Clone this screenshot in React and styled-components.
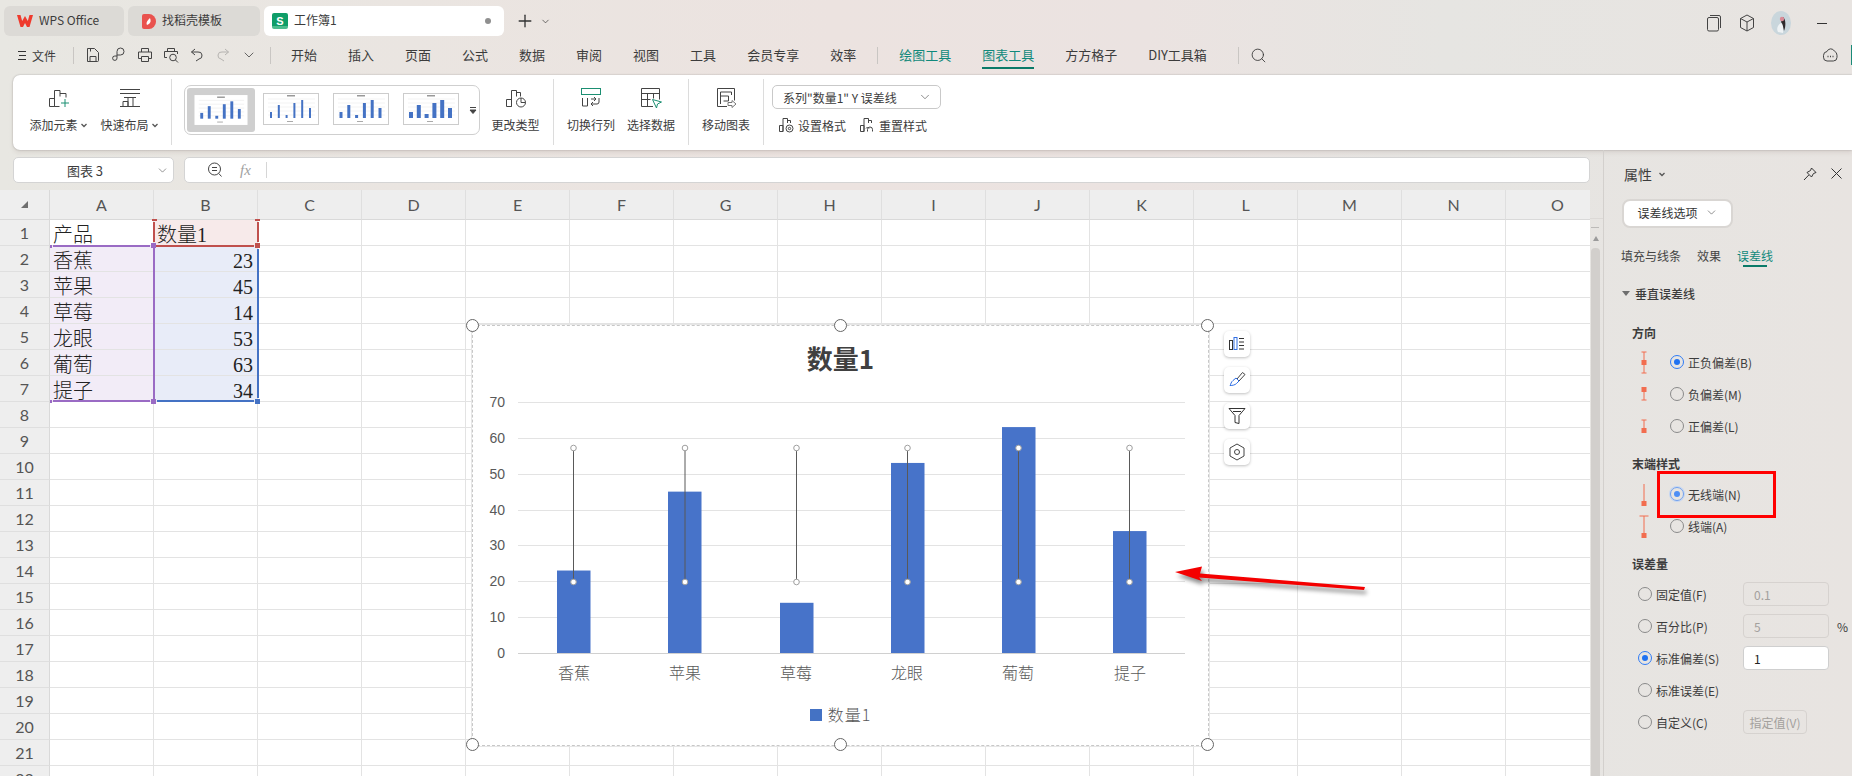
import React from "react";
import styled, { createGlobalStyle } from "styled-components";
import { ChevronDown, Plus, Search } from "lucide-react";

const GlobalStyle = createGlobalStyle`
  html, body {
    margin: 0;
    padding: 0;
    overflow: hidden;
    background: #fff;
  }
  body {
    font-family: "Noto Sans CJK SC", "Liberation Sans", sans-serif;
    color: #333;
  }
  * { box-sizing: border-box; }
`;

const Window = styled.div`
  width: 1852px;
  height: 776px;
  overflow: hidden;
  display: flex;
  flex-direction: column;
  background: linear-gradient(90deg, #e8e7e2 0%, #eae5e1 22%, #ece3e0 45%, #ebe3e1 62%, #e6e5e2 78%, #e8e4e1 100%);
`;

/* ---------- title bar ---------- */
const TitleBar = styled.div`
  height: 42px;
  display: flex;
  align-items: flex-start;
  padding: 6px 0 0 4px;
  gap: 4px;
`;

const Tab = styled.div`
  width: ${(p) => p.$w}px;
  height: 30px;
  padding-left: ${(p) => p.$pad}px;
  display: flex;
  align-items: center;
  gap: 6px;
  border-radius: 6px;
  font-size: 12px;
  color: #3c3c3c;
  background: ${(p) => (p.$active ? "#ffffff" : "#dcdad6")};
`;

const TabLabel = styled.span`
  line-height: 16px;
  padding-bottom: 2px;
`;

const SheetBadge = styled.span`
  width: 16px;
  height: 16px;
  border-radius: 2px;
  background: linear-gradient(180deg, #0f9d68 82%, #4cbc8e 82%);
  color: #fff;
  font: 700 11px "Liberation Sans", sans-serif;
  display: flex;
  align-items: center;
  justify-content: center;
`;

const TabDot = styled.span`
  width: 6px;
  height: 6px;
  border-radius: 50%;
  background: #8f8f8f;
  margin-left: auto;
  margin-right: 13px;
`;

const NewTab = styled.div`
  display: flex;
  align-items: center;
  height: 30px;
  margin-left: 7px;
  gap: 5px;
  color: #333;
`;

const WindowIcons = styled.div`
  margin-left: auto;
  display: flex;
  align-items: center;
  height: 24px;
  margin-top: 5px;
  padding-right: 24px;
  color: #444;
`;

const WinIcon = styled.span`
  display: flex;
  margin-left: ${(p) => p.$ml}px;
`;

/* ---------- menu bar ---------- */
const MenuBar = styled.div`
  height: 26px;
  margin-bottom: 7px;
  display: flex;
  align-items: center;
  padding-left: 18px;
  font-size: 13px;
  color: #3c3c3c;
`;

const FileMenu = styled.div`
  display: flex;
  align-items: center;
  gap: 5px;
  font-size: 12px;
  width: 55px;
`;

const MenuSep = styled.span`
  width: 1px;
  height: 17px;
  background: #c9c6c3;
  flex: none;
  margin: ${(p) => p.$m};
`;

const QuickIcons = styled.div`
  display: flex;
  align-items: center;
  gap: 10px;
  color: #444;
`;

const MenuItems = styled.div`
  display: flex;
  gap: 31px;
`;

const MenuItem = styled.span`
  position: relative;
  line-height: 26px;
  white-space: nowrap;
  color: ${(p) => (p.$teal ? "#10897b" : "#3c3c3c")};

  ${(p) =>
    p.$current &&
    `&::after {
      content: "";
      position: absolute;
      left: 0;
      right: 0;
      bottom: -1px;
      height: 2px;
      background: #0a7a68;
    }`}
`;

const MenuEnd = styled.div`
  margin-left: auto;
  display: flex;
  align-items: center;
  color: #444;
`;

const TealEdge = styled.span`
  width: 1px;
  height: 20px;
  background: #1a8a78;
  margin-left: 12px;
`;

/* ---------- ribbon ---------- */
const Ribbon = styled.div`
  height: 75px;
  margin-left: 13px;
  flex: none;
  display: flex;
  align-items: flex-start;
  background: #fff;
  border-radius: 7px 0 0 7px;
  box-shadow: 0 0 2px rgba(0, 0, 0, 0.28), 0 3px 4px rgba(120, 100, 90, 0.12);
  padding-left: 10px;
`;

const RibbonButton = styled.div`
  width: ${(p) => p.$w}px;
  flex: none;
  padding-top: 11px;
  display: flex;
  flex-direction: column;
  align-items: center;
  font-size: 12px;
  color: #3c3c3c;
`;

const RibbonIcon = styled.div`
  height: 24px;
  display: flex;
  align-items: center;
  justify-content: center;
`;

const RibbonLabel = styled.div`
  margin-top: 6px;
  line-height: 18px;
  display: flex;
  align-items: center;
  gap: 2px;
  white-space: nowrap;
`;

const RibbonSep = styled.span`
  width: 1px;
  height: 66px;
  flex: none;
  margin: 4px ${(p) => p.$r}px 0 ${(p) => p.$l}px;
  background: #dcdcdc;
`;

const Gallery = styled.div`
  width: 296px;
  height: 50px;
  margin-top: 10px;
  flex: none;
  position: relative;
  display: flex;
  align-items: center;
  padding-left: 2px;
  border: 1px solid #cfcfcf;
  border-radius: 7px;
`;

const ThumbFrame = styled.div`
  width: 68px;
  height: 44px;
  flex: none;
  margin-right: 2px;
  padding-top: ${(p) => (p.$active ? "6px" : "5px")};
  display: flex;
  justify-content: center;
  border-radius: 3px;
  background: ${(p) => (p.$active ? "#cfcfcf" : "transparent")};
`;

const GalleryMore = styled.div`
  position: absolute;
  right: 1px;
  top: 20px;
  display: flex;
`;

const StyleColumn = styled.div`
  margin-left: 8px;
  padding-top: 10px;
  display: flex;
  flex-direction: column;
`;

const SeriesSelect = styled.div`
  width: 169px;
  height: 24px;
  padding: 0 8px 0 10px;
  display: flex;
  align-items: center;
  justify-content: space-between;
  border: 1px solid #c9c9c9;
  border-radius: 5px;
  font-size: 12px;
  color: #3c3c3c;
  white-space: pre;
`;

const StyleActions = styled.div`
  display: flex;
  margin-top: 7px;
  gap: 13px;
  padding-left: 6px;
`;

const StyleAction = styled.div`
  display: flex;
  align-items: center;
  gap: 4px;
  height: 18px;
  font-size: 12px;
  color: #3c3c3c;
`;

/* ---------- work area ---------- */
const WorkArea = styled.div`
  flex: 1;
  min-height: 0;
  display: flex;
`;

const LeftColumn = styled.div`
  width: 1590px;
  display: flex;
  flex-direction: column;
`;

const FormulaRow = styled.div`
  height: 26px;
  margin: 7px 0 7px 13px;
  flex: none;
  display: flex;
  gap: 10px;
`;

const NameBox = styled.div`
  width: 161px;
  position: relative;
  display: flex;
  align-items: center;
  justify-content: center;
  padding-right: 17px;
  background: #fff;
  border: 1px solid #d4d4d4;
  border-radius: 5px;
  font-size: 13px;
  color: #3c3c3c;

  svg {
    position: absolute;
    right: 4px;
    top: 6px;
  }
`;

const FormulaBox = styled.div`
  flex: 1;
  display: flex;
  align-items: center;
  padding-left: 22px;
  background: #fff;
  border: 1px solid #d4d4d4;
  border-radius: 5px;
  color: #555;
`;

const FxLabel = styled.span`
  width: 26px;
  margin-left: 17px;
  text-align: left;
  font: italic 15px "Liberation Serif", serif;
  color: #a0a0a0;
`;

const FormulaSep = styled.span`
  width: 1px;
  height: 16px;
  background: #d6d6d6;
`;

const Sheet = styled.div`
  flex: 1;
  position: relative;
  overflow: hidden;
  background: #fff;
`;

const HeaderRow = styled.div`
  height: 30px;
  display: flex;
`;

const Corner = styled.div`
  width: 50px;
  flex: none;
  display: flex;
  align-items: center;
  justify-content: center;
  background: #eeeeee;
  border-right: 1px solid #d9d9d9;
  border-bottom: 1px solid #d9d9d9;
`;

const ColHead = styled.div`
  width: 104px;
  flex: none;
  display: flex;
  align-items: center;
  justify-content: center;
  background: #eeeeee;
  border-right: 1px solid #dfdfdf;
  border-bottom: 1px solid #d9d9d9;
  font: 16px Lato, "Liberation Sans", sans-serif;
  color: #555;
`;

const GridRow = styled.div`
  height: 26px;
  display: flex;
`;

const RowHead = styled.div`
  width: 50px;
  flex: none;
  display: flex;
  align-items: center;
  justify-content: center;
  background: #eeeeee;
  border-right: 1px solid #d9d9d9;
  border-bottom: 1px solid #dfdfdf;
  font: 16px Lato, "Liberation Sans", sans-serif;
  color: #555;
`;

const Cell = styled.div`
  width: 104px;
  flex: none;
  display: flex;
  align-items: center;
  justify-content: ${(p) => (p.$num ? "flex-end" : "flex-start")};
  padding: 5px 4px 0 3px;
  background: ${(p) => p.$tint || "#fff"};
  border-right: 1px solid #e3e3e3;
  border-bottom: 1px solid #e3e3e3;
  font: 300 20px "Liberation Serif", "Noto Sans CJK SC", serif;
  line-height: 23px;
  color: #222;
  overflow: visible;
  white-space: nowrap;
`;

const RangeMark = styled.div`
  position: absolute;
  left: ${(p) => p.$x}px;
  top: ${(p) => p.$y}px;
  width: ${(p) => p.$w}px;
  height: ${(p) => p.$h}px;
  background: ${(p) => p.$c};
`;

/* ---------- chart ---------- */
const ChartFrame = styled.div`
  position: absolute;
  left: 472px;
  top: 135px;
  width: 737px;
  height: 421px;
  display: flex;
  flex-direction: column;
  background: #fff;
  border: 1px dashed #c8c8c8;
  outline: 1px solid #e6e6e6;
`;

const ChartTitle = styled.div`
  height: 65px;
  flex: none;
  padding-bottom: 2px;
  line-height: 63px;
  text-align: center;
  font-size: 26px;
  font-weight: 700;
  color: #404040;
`;

const Legend = styled.div`
  height: 48px;
  display: flex;
  align-items: center;
  justify-content: center;
  gap: 6px;
  font-size: 16px;
  font-weight: 300;
  letter-spacing: 1px;
  color: #595959;
`;

const LegendSwatch = styled.span`
  width: 12px;
  height: 12px;
  margin-top: 2px;
  background: #4472c4;
`;

const Handle = styled.span`
  position: absolute;
  left: ${(p) => p.$x}%;
  top: ${(p) => p.$y}%;
  width: 13px;
  height: 13px;
  margin: -7px 0 0 -7px;
  border-radius: 50%;
  background: #fff;
  border: 1.5px solid #666;
`;

const ChartTools = styled.div`
  position: absolute;
  left: 1224px;
  top: 141px;
  display: flex;
  flex-direction: column;
  gap: 10px;
`;

const ChartTool = styled.div`
  width: 26px;
  height: 26px;
  display: flex;
  align-items: center;
  justify-content: center;
  background: #fff;
  border-radius: 5px;
  box-shadow: 0 1px 3px rgba(0, 0, 0, 0.25);
`;

const ArrowMark = styled.svg`
  position: absolute;
  left: 1170px;
  top: 370px;
  width: 200px;
  height: 40px;
  overflow: visible;
  filter: drop-shadow(2px 4px 2px rgba(0, 0, 0, 0.45));
`;

/* ---------- scrollbar ---------- */
const ScrollColumn = styled.div`
  width: 13px;
  flex: none;
  display: flex;
  flex-direction: column;
  align-items: flex-start;
`;

const ScrollHead = styled.div`
  width: 13px;
  height: 69px;
  flex: none;
  border-bottom: 1px solid #dcd9d6;
`;

const ScrollDash = styled.span`
  width: 8px;
  height: 1px;
  margin: 8px 0 0 1px;
  background: #bcbab8;
`;

const ScrollUp = styled.span`
  width: 0;
  height: 0;
  margin: 8px 0 0 3px;
  border: 3px solid transparent;
  border-bottom: 5px solid #9b9b9b;
  border-top: 0;
`;

const ScrollThumb = styled.div`
  width: 9px;
  flex: 1;
  margin: 7px 0 0 1px;
  border-radius: 4px 4px 0 0;
  background: #d2cfcc;
`;

/* ---------- property panel ---------- */
const Panel = styled.div`
  width: 249px;
  flex: none;
  border-left: 1px solid #d3d0cd;
  font-size: 12px;
  color: #3c3c3c;
`;

const PanelHead = styled.div`
  height: 47px;
  margin-bottom: 2px;
  display: flex;
  align-items: center;
  padding: 0 10px 0 20px;
  font-size: 14px;
`;

const HeadCaret = styled.span`
  display: flex;
  margin-left: 6px;
`;

const PanelHeadIcons = styled.div`
  margin-left: auto;
  display: flex;
  align-items: center;
  gap: 14px;
  color: #444;
`;

const OptionSelect = styled.div`
  width: 111px;
  height: 29px;
  margin-left: 18px;
  padding-bottom: 2px;
  display: flex;
  align-items: center;
  justify-content: center;
  gap: 7px;
  background: #fff;
  border: 2px solid #d9d6d3;
  border-radius: 8px;
  color: #333;
`;

const PanelTabs = styled.div`
  height: 24px;
  margin-top: 15px;
  padding-left: 17px;
  display: flex;
  align-items: center;
  gap: 16px;
`;

const PanelTab = styled.span`
  position: relative;
  color: ${(p) => (p.$active ? "#10897b" : "#444")};

  ${(p) =>
    p.$active &&
    `&::after {
      content: "";
      position: absolute;
      left: 6px;
      right: 6px;
      bottom: -3px;
      height: 2px;
      background: #0a7a68;
    }`}
`;

const SectionTitle = styled.div`
  height: 20px;
  margin-top: 16px;
  padding-left: 18px;
  display: flex;
  align-items: center;
  gap: 5px;
  font-weight: 500;
`;

const Triangle = styled.span`
  width: 0;
  height: 0;
  border: 4px solid transparent;
  border-top: 5px solid #6e6e6e;
  border-bottom: 0;
`;

const GroupTitle = styled.div`
  height: 20px;
  margin-top: ${(p) => p.$mt}px;
  margin-bottom: ${(p) => p.$mb}px;
  padding-left: 28px;
  line-height: 20px;
  font-weight: 700;
`;

const OptionRow = styled.div`
  height: 32px;
  padding-left: ${(p) => p.$pad}px;
  display: flex;
  align-items: center;
  white-space: nowrap;
`;

const OptionIcon = styled.span`
  width: 20px;
  margin-right: 16px;
  display: flex;
  justify-content: center;
`;

const Radio = styled.span`
  width: 14px;
  height: 14px;
  flex: none;
  margin-right: 4px;
  border-radius: 50%;
  border: 1px solid ${(p) => (p.$soft ? "#6fa0f0" : p.$checked ? "#2f7bf5" : "#8a8a8a")};
  box-shadow: ${(p) => (p.$soft ? "0 0 0 1px #c4d6f2" : "none")};
  display: flex;
  align-items: center;
  justify-content: center;

  &::after {
    content: "";
    width: 6px;
    height: 6px;
    border-radius: 50%;
    background: ${(p) => (p.$soft ? "#4d8ef5" : p.$checked ? "#1f72f2" : "transparent")};
  }
`;

const AmountLabel = styled.span`
  width: 87px;
`;

const AmountInput = styled.div`
  width: 86px;
  height: 24px;
  padding-left: 10px;
  display: flex;
  align-items: center;
  border-radius: 4px;
  border: 1px solid ${(p) => (p.$filled ? "#cfcfcf" : "#d6d2cf")};
  background: ${(p) => (p.$filled ? "#ffffff" : "transparent")};
  color: ${(p) => (p.$filled ? "#222" : "#a3a09d")};
`;

const PercentSign = styled.span`
  margin-left: 8px;
`;

const GhostButton = styled.div`
  width: 64px;
  height: 24px;
  display: flex;
  align-items: center;
  justify-content: center;
  border-radius: 4px;
  border: 1px solid #d6d2cf;
  color: #a3a09d;
`;

const RedBox = styled.div`
  position: absolute;
  left: 1657px;
  top: 471px;
  width: 119px;
  height: 47px;
  border: 3px solid #ff0000;
`;

const Root = styled.div`
  position: relative;
  width: 1852px;
  height: 776px;
`;

/* ---------- drawn icons ---------- */
const Svg = ({ w = 24, h = 24, children, stroke = "#444", sw = 1 }) => (
  <svg width={w} height={h} viewBox={`0 0 ${w} ${h}`} fill="none" stroke={stroke} strokeWidth={sw}>
    {children}
  </svg>
);

const SmallCaret = () => (
  <Svg w={8} h={8} stroke="#555" sw={1.3}>
    <path d="M1.5 3l2.5 2.500L6.500 3" />
  </Svg>
);

const WpsLogo = () => (
  <svg width="16" height="12" viewBox="0 0 16 12">
    <path d="M0 0h3.500L5.200 6 8 1l2.800 5L12.500 0H16l-3.500 12H10L8 8l-2 4H3.500z" fill="#ef3a2d" />
  </svg>
);

const DocerLogo = () => (
  <svg width="14" height="15" viewBox="0 0 14 15">
    <path d="M0 2a2 2 0 0 1 2-2h5a7 7.500 0 0 1 0 15H2a2 2 0 0 1-2-2z" fill="#e9524e" />
    <path d="M5 11c-1.500-2.500 1-5 3-7 .8 2.500 1.500 5-3 7z" fill="#fff" />
  </svg>
);

const Avatar = () => (
  <svg width="20" height="24" viewBox="0 0 20 24">
    <ellipse cx="10" cy="12" rx="10" ry="12" fill="#c9d6dc" />
    <path d="M7 21c-2-4 0-7 3-9l3 2-1 8z" fill="#eef2f4" />
    <path d="M12 6c3 2 3 10 1 14-1-4-1-7-3-9z" fill="#2f2a2c" />
    <circle cx="11" cy="8" r="2.200" fill="#d98a96" />
  </svg>
);

const CopyIcon = () => (
  <Svg w={16} h={18}>
    <rect x="1.500" y="3.500" width="11" height="13.500" rx="1.500" />
    <path d="M4 1.500h9a1.500 1.500 0 0 1 1.500 1.500v11" />
  </Svg>
);

const CubeIcon = () => (
  <Svg w={16} h={18}>
    <path d="M8 1l6.500 3.500v9L8 17l-6.500-3.500v-9zM1.500 4.500L8 8l6.500-3.500M8 8v9" />
  </Svg>
);

const MinimizeIcon = () => (
  <Svg w={12} h={10} stroke="#333">
    <path d="M1 5.500h10" />
  </Svg>
);

const SaveIcon = () => (
  <Svg w={16} h={16}>
    <path d="M2.500 1.500h7l4 4v8a1 1 0 0 1-1 1h-10zM5 14.500V9.500h6v5M5.500 1.500v3" />
  </Svg>
);

const KeyIcon = () => (
  <Svg w={16} h={16}>
    <path d="M6 9V4.500a3.500 3.500 0 1 1 3.500 3.500H6M6 9v2a2.200 2.200 0 1 1-2.200-2H6" />
  </Svg>
);

const PrintIcon = () => (
  <Svg w={16} h={16}>
    <path d="M4.500 5V1.500h7V5M4.500 11.500h-3V5h13v6.500h-3M4.500 9.500h7v5h-7z" />
  </Svg>
);

const PreviewIcon = () => (
  <Svg w={16} h={16}>
    <path d="M4.500 4V1.500h7V4M4 10.500H1.500V4.500h13V7" />
    <circle cx="10" cy="10.500" r="3.300" />
    <path d="M12.500 13l2.500 2.500" />
  </Svg>
);

const UndoIcon = () => (
  <Svg w={16} h={16}>
    <path d="M6 2L2.500 5 6 8M2.500 5H9a3.500 3.500 0 0 1 1 7l-3 2" />
  </Svg>
);

const RedoIcon = () => (
  <Svg w={16} h={16} stroke="#b5b3b0">
    <path d="M10 2l3.500 3L10 8M13.500 5H7a3.500 3.500 0 0 0-1 7l3 2" />
  </Svg>
);

const ChatIcon = () => (
  <Svg w={17} h={16}>
    <path d="M5 4.500A4 4 0 0 1 12.300 4a4.700 4.700 0 0 1 2.700 4.300v2A3.700 3.700 0 0 1 11.300 14H5a3.700 3.700 0 0 1-3.500-3.800V8.400A4 4 0 0 1 5 4.500z" />
    <path d="M5.500 9.500h1M8 9.500h1M10.500 9.500h1" strokeWidth="1.400" />
  </Svg>
);

const AddElementIcon = () => (
  <Svg>
    <path d="M2.500 12.500h5v8h-5zM7.500 20.500v-16h5.500v6M13 7.500h6v4M7.500 20.500h5" />
    <path d="M14 17h8M18 13v8" stroke="#1b8f72" />
  </Svg>
);

const QuickLayoutIcon = () => (
  <Svg>
    <path d="M2 3.500h20M2 7.500h20M6 11.500h12M2 20.500h20M5 20.500v-5h5v5M10 20.500v-9h5v9" />
  </Svg>
);

const ChangeTypeIcon = () => (
  <Svg>
    <path d="M2.500 13.500h5v7h-5zM7.500 20.500v-16h5v6M12.500 6.500h4v4" />
    <circle cx="17" cy="16.500" r="4.500" />
    <path d="M17 12v4.500h4.500" />
  </Svg>
);

const SwitchIcon = () => (
  <Svg>
    <rect x="2.500" y="2.500" width="19" height="6" stroke="#1b8f72" />
    <path d="M3.500 12v8h5v-8M20 12v4a2 2 0 0 1-2 2h-6M14 16l-2 2 2 2M12 13h5M15 11l2 2-2 2" />
  </Svg>
);

const SelectDataIcon = () => (
  <Svg>
    <path d="M14 20.500H2.500v-18h18v11M2.500 7.500h18M2.500 13.500h9M8.500 7.500v13M14.500 7.500v5" />
    <path d="M13.500 13.500l9 2.500-4 2-1 4z" stroke="#1b8f72" />
  </Svg>
);

const MoveChartIcon = () => (
  <Svg>
    <path d="M13 20.500H3.500v-18h17v12M6.500 18v-12h11v3M6.500 10h8v5h-5" />
    <path d="M14 16.500h4v-2l4 3.500-4 3.500v-2h-4z" stroke="#777" />
  </Svg>
);

const FormatIcon = () => (
  <Svg w={16} h={16}>
    <path d="M1.500 8.500h3.500v6h-3.500zM5 14.500V1.500h4.500V6M9.500 3.500h3V6" />
    <circle cx="11.500" cy="11.500" r="3.500" />
    <circle cx="11.500" cy="11.500" r="1.200" />
  </Svg>
);

const ResetIcon = () => (
  <Svg w={16} h={16}>
    <path d="M1.500 8.500h3.500v6h-3.500zM5 14.500V1.500h4.500V6M9.500 3.500h3V6" />
    <path d="M8.500 14.500v-2a2.500 2.500 0 0 1 5 0v2M7 11.500l1.500-1.500 1.500 1.500" />
  </Svg>
);

const ZoomOutIcon = () => (
  <Svg w={16} h={16}>
    <circle cx="7.500" cy="7" r="6" />
    <path d="M5 5.500h5M5 8.500h5M11.800 11.500l2.700 3" />
  </Svg>
);

const PinIcon = () => (
  <Svg w={14} h={14} stroke="#333">
    <path d="M8.500 1L13 5.500l-2.500 1-2 3.500L4 5.500l3.500-2zM5.800 8L1 13" />
  </Svg>
);

const CloseIcon = () => (
  <Svg w={11} h={11} stroke="#333">
    <path d="M.5.500l10 10M10.500.500l-10 10" />
  </Svg>
);

const ColumnsTool = () => (
  <Svg w={18} h={16}>
    <rect x="1.500" y="4.500" width="3" height="9" stroke="#333" />
    <rect x="6" y="1.500" width="3" height="12" stroke="#2f6ee5" />
    <path d="M11 2.500h5M11 6h5M11 9.500h5M11 13h5" stroke="#333" />
  </Svg>
);

const BrushTool = () => (
  <Svg w={18} h={18}>
    <path d="M8 7l3 3-2.500 2.500c-1.500 1.500-4 2-6.500 2 1-1.500 1-3.500 3-5z" stroke="#2f6ee5" />
    <path d="M9 8l5.500-6.500 2.500 2L11 10" />
  </Svg>
);

const FilterTool = () => (
  <Svg w={18} h={18} stroke="#333">
    <path d="M1 1.500h16l-6 7v8l-4-1v-7zM5 4.500h8" />
  </Svg>
);

const SettingTool = () => (
  <Svg w={18} h={18}>
    <path d="M9 1l7 4v8l-7 4-7-4V5z" />
    <circle cx="9" cy="9" r="2.500" />
  </Svg>
);

/* error bar glyphs in the panel */
const BarGlyph = ({ topCap, bottomCap, square }) => {
  const squareY = square === "mid" ? 9 : 18;
  const y2 = square === "bottom" ? 20 : 22;
  const range = topCap === "wide" ? 4.5 : 2.5;
  return (
    <svg width="12" height="23" viewBox="0 0 12 23" fill="none" stroke="#f26d4f">
      <path d={`M6 1V${y2}`} />
      {topCap && <path d={`M${6 - range} 1h${range * 2}`} />}
      {bottomCap && <path d="M3.500 22h5" />}
      <rect x="3.500" y={squareY} width="5" height="5" fill="#f26d4f" stroke="none" />
    </svg>
  );
};

const ShortGlyph = ({ dir }) => (
  <svg width="12" height="14" viewBox="0 0 12 14" fill="none" stroke="#f26d4f">
    <path d="M6 1v12" />
    {dir === "down" ? <path d="M3.500 13h5" /> : <path d="M3.500 1h5" />}
    <rect x="3.500" y={dir === "down" ? 0 : 9} width="5" height="5" fill="#f26d4f" stroke="none" />
  </svg>
);

/* ---------- chart data ---------- */
const products = [
  ["香蕉", 23],
  ["苹果", 45],
  ["草莓", 14],
  ["龙眼", 53],
  ["葡萄", 63],
  ["提子", 34],
];
const barLefts = [557, 668, 780, 891, 1002, 1113];
const capXs = [573, 684.5, 796, 907, 1018, 1129];
const labelXs = [574, 685, 796, 907, 1018, 1130];
const axisY = (v) => 652 - v * 3.586;

const ChartThumb = ({ bars, w, h, barW, dark }) => (
  <svg width={w} height={h} viewBox="0 0 56 32">
    <rect x=".5" y=".5" width="55" height="31" fill="#fff" stroke={dark ? "none" : "#cccccc"} />
    <rect x="24" y="2" width="8" height="1.500" fill="#999" />
    {[6, 10, 14, 18, 22].map((y) => (
      <path key={y} d={`M5 ${y}h47`} stroke="#e4e4e4" strokeWidth=".5" />
    ))}
    {bars.map((v, i) => (
      <rect key={i} x={8 + i * 7.8 - barW / 2} y={25 - v} width={barW} height={v} fill="#4472c4" />
    ))}
    <rect x="24" y="28" width="6" height="1" fill="#aaa" />
  </svg>
);

const Plot = () => (
  <svg width="735" height="299" viewBox="473 390 735 299" style={{ flex: "none" }}>
    {[0, 10, 20, 30, 40, 50, 60, 70].map((v) => (
      <g key={v}>
        <line
          x1="518"
          x2="1185"
          y1={Math.round(axisY(v)) + 0.5}
          y2={Math.round(axisY(v)) + 0.5}
          stroke={v === 0 ? "#d0d0d0" : "#e3e3e3"}
        />
        <text
          x="505"
          y={axisY(v) + 5}
          textAnchor="end"
          fontSize="14"
          fontFamily="'Liberation Sans', sans-serif"
          fill="#595959"
        >
          {v}
        </text>
      </g>
    ))}
    {products.map(([name, v], i) => (
      <g key={name}>
        <rect x={barLefts[i]} y={axisY(v)} width="33.500" height={652 - axisY(v)} fill="#4773c9" />
        <line x1={capXs[i] + 0.5} x2={capXs[i] + 0.5} y1="447" y2="581" stroke="#595959" />
        <circle cx={capXs[i] + 0.5} cy="447" r="2.800" fill="#fff" stroke="#a0a0a0" />
        <circle cx={capXs[i] + 0.5} cy="581" r="2.800" fill="#fff" stroke="#a0a0a0" />
        <text x={labelXs[i]} y="678" textAnchor="middle" fontSize="16" fontWeight="300" fill="#595959">
          {name}
        </text>
      </g>
    ))}
  </svg>
);

const columns = "ABCDEFGHIJKLMNO".split("");
const cellData = [
  ["产品", "数量1", "", "#f7eaea"],
  ...products.map(([n, v]) => [n, v, "#f2ecf7", "#e8ecf8"]),
];

const rangeMarks = [
  // purple category range
  [53, 54.5, 97, 2, "#9a6bc4"],
  [50, 54.5, 2, 3, "#9a6bc4"],
  [152.5, 58, 2, 151, "#9a6bc4"],
  [53, 210, 97, 2, "#9a6bc4"],
  [50, 210, 2, 3, "#9a6bc4"],
  // red title range
  [151.5, 29, 5, 2, "#c0504d"],
  [152.5, 32, 2, 20, "#c0504d"],
  [255, 29, 5, 2, "#c0504d"],
  [256.5, 32, 2, 20, "#c0504d"],
  [156, 54.5, 98, 2, "#c0504d"],
  // blue values range
  [256.5, 59, 2, 149, "#4472c4"],
  [157, 210, 97, 2, "#4472c4"],
  // corner handles
  [151, 53, 5, 5, "#9a6bc4"],
  [151, 208.5, 5, 5, "#9a6bc4"],
  [255, 53, 5, 5, "#c0504d"],
  [255, 208.5, 5, 5, "#4472c4"],
];

const handles = [
  [0, 0],
  [50, 0],
  [100, 0],
  [0, 100],
  [50, 100],
  [100, 100],
];

export default function App() {
  return (
    <Root>
      <GlobalStyle />
      <Window>
        <TitleBar>
          <Tab $w={120} $pad={13}>
            <WpsLogo />
            <TabLabel>WPS Office</TabLabel>
          </Tab>
          <Tab $w={132} $pad={14}>
            <DocerLogo />
            <TabLabel>找稻壳模板</TabLabel>
          </Tab>
          <Tab $w={240} $pad={8} $active>
            <SheetBadge>S</SheetBadge>
            <TabLabel>工作簿1</TabLabel>
            <TabDot />
          </Tab>
          <NewTab>
            <Plus size={20} strokeWidth={1.6} />
            <ChevronDown size={11} strokeWidth={1.5} />
          </NewTab>
          <WindowIcons>
            <WinIcon $ml={0}><CopyIcon /></WinIcon>
            <WinIcon $ml={17}><CubeIcon /></WinIcon>
            <WinIcon $ml={16}><Avatar /></WinIcon>
            <WinIcon $ml={25}><MinimizeIcon /></WinIcon>
          </WindowIcons>
        </TitleBar>

        <MenuBar>
          <FileMenu>
            <Svg w={9} h={11} stroke="#333">
              <path d="M0 1.500h8M1 5.500h7M0 9.500h8" />
            </Svg>
            文件
          </FileMenu>
          <MenuSep $m="0 11px 0 0" />
          <QuickIcons>
            <SaveIcon />
            <KeyIcon />
            <PrintIcon />
            <PreviewIcon />
            <UndoIcon />
            <RedoIcon />
            <ChevronDown size={16} strokeWidth={1.2} />
          </QuickIcons>
          <MenuSep $m="0 20px 0 13px" />
          <MenuItems>
            {["开始", "插入", "页面", "公式", "数据", "审阅", "视图", "工具", "会员专享", "效率"].map((m) => (
              <MenuItem key={m}>{m}</MenuItem>
            ))}
          </MenuItems>
          <MenuSep $m="0 21px 0 21px" />
          <MenuItems>
            <MenuItem $teal>绘图工具</MenuItem>
            <MenuItem $teal $current>图表工具</MenuItem>
            <MenuItem>方方格子</MenuItem>
            <MenuItem>DIY工具箱</MenuItem>
          </MenuItems>
          <MenuSep $m="0 11px 0 31px" />
          <Search size={17} strokeWidth={1.2} color="#333" />
          <MenuEnd>
            <ChatIcon />
            <TealEdge />
          </MenuEnd>
        </MenuBar>

        <Ribbon>
          <RibbonButton $w={71}>
            <RibbonIcon><AddElementIcon /></RibbonIcon>
            <RibbonLabel>添加元素<SmallCaret /></RibbonLabel>
          </RibbonButton>
          <RibbonButton $w={71}>
            <RibbonIcon><QuickLayoutIcon /></RibbonIcon>
            <RibbonLabel>快速布局<SmallCaret /></RibbonLabel>
          </RibbonButton>
          <RibbonSep $l={6} $r={12} />
          <Gallery>
            <ThumbFrame $active>
              <ChartThumb dark w={54} h={32} barW={3} bars={[6, 13, 3, 15, 18, 10]} />
            </ThumbFrame>
            <ThumbFrame>
              <ChartThumb w={56} h={32} barW={2} bars={[6, 13, 3, 15, 18, 10]} />
            </ThumbFrame>
            <ThumbFrame>
              <ChartThumb w={56} h={32} barW={3} bars={[6, 13, 3, 15, 18, 10]} />
            </ThumbFrame>
            <ThumbFrame>
              <ChartThumb w={56} h={32} barW={4} bars={[6, 13, 4, 15, 18, 10]} />
            </ThumbFrame>
            <GalleryMore>
              <Svg w={9} h={10} stroke="#444">
                <path d="M1 1.500h6" />
                <path d="M1 4l3 3.500L7 4z" fill="#444" />
              </Svg>
            </GalleryMore>
          </Gallery>
          <RibbonButton $w={71}>
            <RibbonIcon><ChangeTypeIcon /></RibbonIcon>
            <RibbonLabel>更改类型</RibbonLabel>
          </RibbonButton>
          <RibbonSep $l={2} $r={7} />
          <RibbonButton $w={60}>
            <RibbonIcon><SwitchIcon /></RibbonIcon>
            <RibbonLabel>切换行列</RibbonLabel>
          </RibbonButton>
          <RibbonButton $w={60}>
            <RibbonIcon><SelectDataIcon /></RibbonIcon>
            <RibbonLabel>选择数据</RibbonLabel>
          </RibbonButton>
          <RibbonSep $l={7} $r={7} />
          <RibbonButton $w={60}>
            <RibbonIcon><MoveChartIcon /></RibbonIcon>
            <RibbonLabel>移动图表</RibbonLabel>
          </RibbonButton>
          <RibbonSep $l={7} $r={0} />
          <StyleColumn>
            <SeriesSelect>
              系列"数量1" Y 误差线
              <ChevronDown size={14} strokeWidth={1} />
            </SeriesSelect>
            <StyleActions>
              <StyleAction><FormatIcon />设置格式</StyleAction>
              <StyleAction><ResetIcon />重置样式</StyleAction>
            </StyleActions>
          </StyleColumn>
        </Ribbon>

        <WorkArea>
          <LeftColumn>
            <FormulaRow>
              <NameBox>
                图表 3
                <ChevronDown size={13} strokeWidth={1} />
              </NameBox>
              <FormulaBox>
                <ZoomOutIcon />
                <FxLabel>fx</FxLabel>
                <FormulaSep />
              </FormulaBox>
            </FormulaRow>

            <Sheet>
              <HeaderRow>
                <Corner>
                  <Svg w={9} h={9} stroke="none">
                    <path d="M8 1v7H1z" fill="#6f6f6f" />
                  </Svg>
                </Corner>
                {columns.map((c) => (
                  <ColHead key={c}>{c}</ColHead>
                ))}
              </HeaderRow>
              {Array.from({ length: 22 }, (_, r) => {
                const data = cellData[r];
                return (
                  <GridRow key={r}>
                    <RowHead>{r + 1}</RowHead>
                    {columns.map((c, i) => (
                      <Cell
                        key={c}
                        $num={data && i === 1 && r > 0}
                        $tint={data && i < 2 ? data[i + 2] : undefined}
                      >
                        {data && i < 2 ? data[i] : ""}
                      </Cell>
                    ))}
                  </GridRow>
                );
              })}

              {rangeMarks.map(([x, y, w, h, c], i) => (
                <RangeMark key={i} $x={x} $y={y} $w={w} $h={h} $c={c} />
              ))}

              <ChartFrame>
                <ChartTitle>数量1</ChartTitle>
                <Plot />
                <Legend>
                  <LegendSwatch />
                  数量1
                </Legend>
                {handles.map(([x, y]) => (
                  <Handle key={`${x}-${y}`} $x={x} $y={y} />
                ))}
              </ChartFrame>

              <ChartTools>
                <ChartTool><ColumnsTool /></ChartTool>
                <ChartTool><BrushTool /></ChartTool>
                <ChartTool><FilterTool /></ChartTool>
                <ChartTool><SettingTool /></ChartTool>
              </ChartTools>

              <ArrowMark viewBox="1170 560 200 40">
                <path
                  d="M1175 572L1202 566.500L1200 573.500L1365 587L1364 590L1199 577.500L1202 581z"
                  fill="#f40000"
                />
              </ArrowMark>
            </Sheet>
          </LeftColumn>

          <ScrollColumn>
            <ScrollHead />
            <ScrollDash />
            <ScrollUp />
            <ScrollThumb />
          </ScrollColumn>

          <Panel>
            <PanelHead>
              属性
              <HeadCaret><SmallCaret /></HeadCaret>
              <PanelHeadIcons>
                <PinIcon />
                <CloseIcon />
              </PanelHeadIcons>
            </PanelHead>
            <OptionSelect>
              误差线选项
              <ChevronDown size={13} strokeWidth={1} />
            </OptionSelect>
            <PanelTabs>
              <PanelTab>填充与线条</PanelTab>
              <PanelTab>效果</PanelTab>
              <PanelTab $active>误差线</PanelTab>
            </PanelTabs>
            <SectionTitle>
              <Triangle />
              垂直误差线
            </SectionTitle>

            <GroupTitle $mt={20} $mb={3}>方向</GroupTitle>
            <OptionRow $pad={30}>
              <OptionIcon><BarGlyph topCap bottomCap square="mid" /></OptionIcon>
              <Radio $checked />
              正负偏差(B)
            </OptionRow>
            <OptionRow $pad={30}>
              <OptionIcon><ShortGlyph dir="down" /></OptionIcon>
              <Radio />
              负偏差(M)
            </OptionRow>
            <OptionRow $pad={30}>
              <OptionIcon><ShortGlyph dir="up" /></OptionIcon>
              <Radio />
              正偏差(L)
            </OptionRow>

            <GroupTitle $mt={12} $mb={4}>末端样式</GroupTitle>
            <OptionRow $pad={30}>
              <OptionIcon><BarGlyph square="bottom" /></OptionIcon>
              <Radio $checked $soft />
              无线端(N)
            </OptionRow>
            <OptionRow $pad={30}>
              <OptionIcon><BarGlyph topCap="wide" square="bottom" /></OptionIcon>
              <Radio />
              线端(A)
            </OptionRow>

            <GroupTitle $mt={12} $mb={4}>误差量</GroupTitle>
            <OptionRow $pad={34}>
              <Radio />
              <AmountLabel>固定值(F)</AmountLabel>
              <AmountInput>0.1</AmountInput>
            </OptionRow>
            <OptionRow $pad={34}>
              <Radio />
              <AmountLabel>百分比(P)</AmountLabel>
              <AmountInput>5</AmountInput>
              <PercentSign>%</PercentSign>
            </OptionRow>
            <OptionRow $pad={34}>
              <Radio $checked />
              <AmountLabel>标准偏差(S)</AmountLabel>
              <AmountInput $filled>1</AmountInput>
            </OptionRow>
            <OptionRow $pad={34}>
              <Radio />
              <AmountLabel>标准误差(E)</AmountLabel>
            </OptionRow>
            <OptionRow $pad={34}>
              <Radio />
              <AmountLabel>自定义(C)</AmountLabel>
              <GhostButton>指定值(V)</GhostButton>
            </OptionRow>
          </Panel>
        </WorkArea>
      </Window>
      <RedBox />
    </Root>
  );
}
